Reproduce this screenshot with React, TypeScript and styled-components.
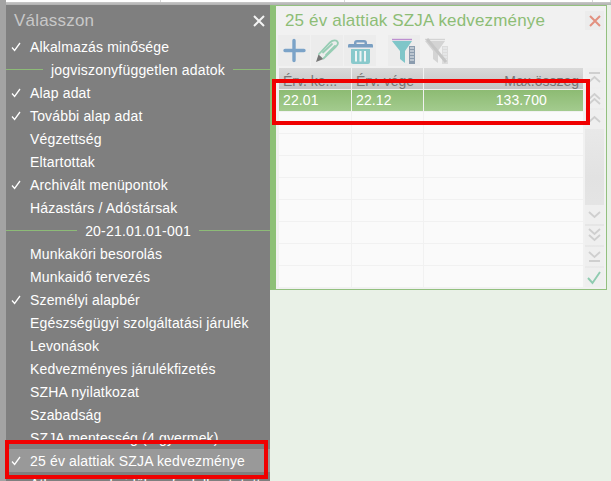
import styled, { createGlobalStyle } from "styled-components";

const GlobalStyle = createGlobalStyle`
  html, body {
    margin: 0;
    padding: 0;
    background: #e9f1e7;
    font-family: "Liberation Sans", Arial, sans-serif;
  }
`;

const Page = styled.div`
  position: relative;
  display: flex;
  width: 611px;
  height: 481px;
  overflow: hidden;
  background: #e9f1e7;
`;
const Gutter = styled.div`
  width: 6px;
  background: #a3a3a3;
`;
const Column = styled.div`
  flex: 1;
  min-width: 0;
`;
const TopStrip = styled.div`
  display: grid;
  grid-template-columns: 155px 184px 248px 1fr;
  height: 5px;
  box-sizing: border-box;
  background: linear-gradient(#d8d8d8, #b0b0b0);
`;
const TopCell = styled.div`
  height: 2px;
  background: #fff;
  border-right: 1px solid #d8d8d8;
`;
const Body = styled.div`
  display: flex;
  height: 476px;
`;
const Sidebar = styled.aside`
  width: 264px;
  background: #7f7f7f;
  color: #fff;
  overflow: hidden;
`;
const SideHead = styled.div`
  display: flex;
  align-items: center;
  justify-content: space-between;
  height: 30px;
  padding: 2px 5px 0 8px;
  box-sizing: border-box;
`;
const SideTitle = styled.h2`
  margin: 0;
  font-size: 17px;
  font-weight: 400;
  letter-spacing: 0.2px;
  color: #c8c8c8;
`;
const MenuItem = styled.div<{ active?: boolean }>`
  display: flex;
  align-items: center;
  height: 23px;
  font-size: 14px;
  letter-spacing: 0.16px;
  background: ${(p) => (p.active ? "#999999" : "transparent")};
`;
const Tick = styled.span`
  width: 24px;
  display: flex;
  justify-content: center;
  padding-right: 4px;
  box-sizing: border-box;
`;
const Separator = styled.div`
  display: flex;
  align-items: center;
  gap: 8px;
  height: 23px;
  font-size: 14px;
  letter-spacing: 0.2px;
  &::before,
  &::after {
    content: "";
    flex: 1;
    height: 1px;
    background: #8dbb77;
  }
`;
const Main = styled.main`
  flex: 1;
  min-width: 0;
`;
const Panel = styled.section`
  width: 337px;
  height: 285px;
  box-sizing: border-box;
  background: #f1f1f1;
  border-top: 1px solid #93c07f;
  border-left: 6px solid #8dc076;
  border-right: 1px solid #93c07f;
  border-bottom: 1px solid #93c07f;
  padding-left: 2px;
`;
const PanelHead = styled.div`
  display: flex;
  align-items: center;
  justify-content: space-between;
  height: 29px;
  padding: 0 2px 0 7px;
`;
const PanelTitle = styled.h1`
  margin: 0;
  font-size: 17px;
  font-weight: 400;
  letter-spacing: 0.16px;
  color: #8dbd76;
`;
const CloseBox = styled.button`
  display: flex;
  align-items: center;
  justify-content: center;
  width: 19px;
  height: 19px;
  padding: 0;
  border: 0;
  background: #ececec;
`;
const Toolbar = styled.div`
  display: flex;
  height: 33px;
`;
const ToolButton = styled.button<{ gapLeft?: number; flat?: boolean }>`
  display: flex;
  align-items: center;
  justify-content: center;
  width: 32px;
  height: 31px;
  margin-left: ${(p) => p.gapLeft ?? 0}px;
  margin-right: 1px;
  padding: 0;
  border: 0;
  background: ${(p) => (p.flat ? "transparent" : "#ececec")};
`;
const Content = styled.div`
  display: flex;
  margin-left: 1px;
`;
const Table = styled.div`
  width: 305px;
`;
const Row = styled.div`
  display: grid;
  grid-template-columns: 73px 72px 160px;
`;
const HeadCell = styled.div<{ right?: boolean }>`
  height: 21px;
  margin-right: 1px;
  box-sizing: border-box;
  background: linear-gradient(#d9d9d9, #c4c4c4);
  color: #777;
  font-size: 14px;
  line-height: 26px;
  padding: 0 4px;
  overflow: hidden;
  white-space: nowrap;
  text-align: ${(p) => (p.right ? "right" : "left")};
`;
const BodyCell = styled.div<{ selected?: boolean; right?: boolean }>`
  height: 21px;
  margin: 1px 1px 0 0;
  box-sizing: border-box;
  background: ${(p) =>
    p.selected ? "linear-gradient(#8dbb73, #a3cb8e)" : "#fafafa"};
  color: #fff;
  font-size: 14px;
  letter-spacing: 0.1px;
  line-height: 21px;
  padding: ${(p) => (p.right ? "0 36px 0 0" : "0 4px")};
  text-align: ${(p) => (p.right ? "right" : "left")};
`;
const Scroller = styled.div`
  display: flex;
  flex-direction: column;
  justify-content: space-between;
  width: 19px;
  height: 219px;
  margin-left: 1px;
  background: linear-gradient(#f1f1f1, #e2e2e2 50%, #ebebeb);
`;
const ScrollGroup = styled.div`
  display: flex;
  flex-direction: column;
  gap: 2px;
`;
const ScrollButton = styled.button`
  display: flex;
  align-items: center;
  justify-content: center;
  width: 19px;
  height: 19px;
  padding: 0;
  border: 0;
  background: #efefef;
`;
const Marker = styled.div`
  position: absolute;
  box-sizing: border-box;
  border: 4px solid #f00000;
  pointer-events: none;
`;
const TableMarker = styled(Marker)`
  left: 272px;
  top: 79px;
  width: 318px;
  height: 46px;
`;
const MenuMarker = styled(Marker)`
  left: 5px;
  top: 440px;
  width: 263px;
  height: 39px;
`;

const TickIcon = () => (
  <svg width="10" height="10" viewBox="0 0 10 10">
    <path d="M1 5.5 L3.6 8.5 L9 1" fill="none" stroke="#fff" strokeWidth="1.3" />
  </svg>
);

const XIcon = ({ color }: { color: string }) => (
  <svg width="12" height="12" viewBox="0 0 12 12">
    <path d="M1 1 L11 11 M11 1 L1 11" stroke={color} strokeWidth="2" />
  </svg>
);

const PlusIcon = () => (
  <svg width="32" height="31" viewBox="0 0 32 31">
    <path d="M16 5.500 V25.500 M7 15.500 H26" stroke="#7ba3c8" strokeWidth="3.400" strokeLinecap="round" />
  </svg>
);

const PencilIcon = () => (
  <svg width="32" height="31" viewBox="0 0 32 31">
    <path d="M5 27 L7.500 19.500 L12.500 24 Z" fill="#777" />
    <path
      d="M8 19 L19 7.500 C22 4.500 26 5 26.500 7 M12.500 23.500 L24.500 12 C27 9.500 27.500 8 26.500 7 M12 17.500 L21 9 M15 20 L24 11"
      fill="none"
      stroke="#97cdb4"
      strokeWidth="1.800"
      strokeLinecap="round"
    />
  </svg>
);

const TrashIcon = () => (
  <svg width="32" height="31" viewBox="0 0 32 31">
    <path d="M10 8 Q10 5 13 5 H20 Q23 5 23 8 V9 H20.500 V7.500 H12.500 V9 H10 Z" fill="#7a9fc2" />
    <path d="M5 9 H28 Q29 9 29 10.500 V12.500 H4 V10.500 Q4 9 5 9 Z" fill="#7a9fc2" />
    <path d="M7 14 H26 V27 Q26 29 24 29 H9 Q7 29 7 27 Z" fill="#89c9cc" />
    <path d="M12 16 V26.500 M16.500 16 V26.500 M21 16 V26.500" stroke="#eef4f4" strokeWidth="2" />
  </svg>
);

const FilterIcon = ({ disabled }: { disabled?: boolean }) => (
  <svg width="32" height="31" viewBox="0 0 32 31">
    <path d="M4 4.500 H24" stroke={disabled ? "#d4d4d4" : "#bd8fd0"} strokeWidth="1.400" />
    <path d="M4 6 H24 L17 16 V28 L12 24 V16 Z" fill={disabled ? "#d4d4d4" : "#7fc6c9"} />
    <path d="M21 11 H27 V29 H21 Z" fill={disabled ? "#dcdcdc" : "#8b9cae"} />
    <path
      d="M22 13 H26 M22 16 H26 M22 19 H26 M22 22 H26 M22 25 H26"
      stroke="#eef0f2"
      strokeWidth="1.200"
    />
    {disabled && <path d="M6 4 L25 27" stroke="#c6c6c6" strokeWidth="3" />}
  </svg>
);

const chevrons: Record<string, string> = {
  first: "M4 5 H15 M4 14 L9.500 9 L15 14",
  prev2: "M4 10 L9.500 5 L15 10 M4 15 L9.500 10 L15 15",
  prev: "M4 12 L9.500 7 L15 12",
  next: "M4 7 L9.500 12 L15 7",
  next2: "M4 3 L9.500 8 L15 3 M4 9 L9.500 14 L15 9",
  last: "M4 5 L9.500 10 L15 5 M4 14 H15",
};

const ChevronIcon = ({ kind }: { kind: string }) => (
  <svg width="19" height="19" viewBox="0 0 19 19">
    <path d={chevrons[kind]} fill="none" stroke="#cfcfcf" strokeWidth="1.800" />
  </svg>
);

const CheckIcon = () => (
  <svg width="19" height="19" viewBox="0 0 19 19">
    <path d="M3 10 L7.500 15 L15 4" fill="none" stroke="#8fcbb0" strokeWidth="1.900" />
  </svg>
);

type Entry = { label: string; checked?: boolean; active?: boolean; separator?: boolean };

const entries: Entry[] = [
  { label: "Alkalmazás minősége", checked: true },
  { label: "jogviszonyfüggetlen adatok", separator: true },
  { label: "Alap adat", checked: true },
  { label: "További alap adat", checked: true },
  { label: "Végzettség" },
  { label: "Eltartottak" },
  { label: "Archivált menüpontok", checked: true },
  { label: "Házastárs / Adóstársak" },
  { label: "20-21.01.01-001", separator: true },
  { label: "Munkaköri besorolás" },
  { label: "Munkaidő tervezés" },
  { label: "Személyi alapbér", checked: true },
  { label: "Egészségügyi szolgáltatási járulék" },
  { label: "Levonások" },
  { label: "Kedvezményes járulékfizetés" },
  { label: "SZHA nyilatkozat" },
  { label: "Szabadság" },
  { label: "SZJA mentesség (4 gyermek)" },
  { label: "25 év alattiak SZJA kedvezménye", checked: true, active: true },
  { label: "Átlagos munkaidőben foglalkoztatott" },
];

const emptyRows = Array.from({ length: 8 }, (_, idx) => idx);

const App = () => {
  return (
    <Page>
      <GlobalStyle />
      <Gutter />
      <Column>
        <TopStrip>
          <TopCell />
          <TopCell />
          <TopCell />
          <TopCell />
        </TopStrip>
        <Body>
          <Sidebar>
            <SideHead>
              <SideTitle>Válasszon</SideTitle>
              <XIcon color="#f4f4f4" />
            </SideHead>
            {entries.map((entry) =>
              entry.separator ? (
                <Separator key={entry.label}>{entry.label}</Separator>
              ) : (
                <MenuItem key={entry.label} active={entry.active}>
                  <Tick>{entry.checked && <TickIcon />}</Tick>
                  {entry.label}
                </MenuItem>
              ),
            )}
          </Sidebar>
          <Main>
            <Panel>
              <PanelHead>
                <PanelTitle>25 év alattiak SZJA kedvezménye</PanelTitle>
                <CloseBox>
                  <XIcon color="#e2907f" />
                </CloseBox>
              </PanelHead>
              <Toolbar>
                <ToolButton><PlusIcon /></ToolButton>
                <ToolButton><PencilIcon /></ToolButton>
                <ToolButton><TrashIcon /></ToolButton>
                <ToolButton gapLeft={11}><FilterIcon /></ToolButton>
                <ToolButton flat><FilterIcon disabled /></ToolButton>
              </Toolbar>
              <Content>
                <Table>
                  <Row>
                    <HeadCell>Érv. ke...</HeadCell>
                    <HeadCell>Érv. vége</HeadCell>
                    <HeadCell right>Max.összeg</HeadCell>
                  </Row>
                  <Row>
                    <BodyCell selected>22.01</BodyCell>
                    <BodyCell selected>22.12</BodyCell>
                    <BodyCell selected right>133.700</BodyCell>
                  </Row>
                  {emptyRows.map((idx) => (
                    <Row key={idx}>
                      <BodyCell />
                      <BodyCell />
                      <BodyCell />
                    </Row>
                  ))}
                </Table>
                <Scroller>
                  <ScrollGroup>
                    <ScrollButton><ChevronIcon kind="first" /></ScrollButton>
                    <ScrollButton><ChevronIcon kind="prev2" /></ScrollButton>
                    <ScrollButton><ChevronIcon kind="prev" /></ScrollButton>
                  </ScrollGroup>
                  <ScrollGroup>
                    <ScrollButton><ChevronIcon kind="next" /></ScrollButton>
                    <ScrollButton><ChevronIcon kind="next2" /></ScrollButton>
                    <ScrollButton><ChevronIcon kind="last" /></ScrollButton>
                    <ScrollButton><CheckIcon /></ScrollButton>
                  </ScrollGroup>
                </Scroller>
              </Content>
            </Panel>
          </Main>
        </Body>
      </Column>
      <TableMarker />
      <MenuMarker />
    </Page>
  );
};

export default App;
